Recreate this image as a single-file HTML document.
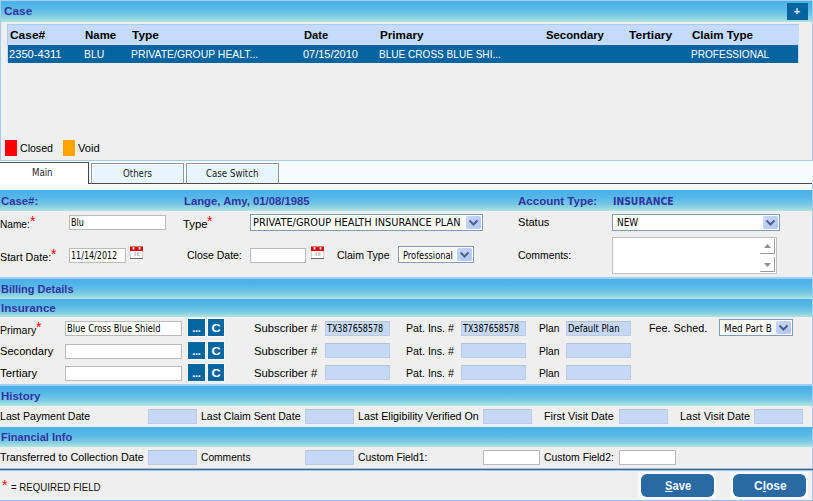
<!DOCTYPE html>
<html><head><meta charset="utf-8"><title>Case</title>
<style>
*{box-sizing:border-box;margin:0;padding:0}
html,body{width:813px;height:501px;overflow:hidden;background:#efefef}
.a{position:absolute}
.t{position:absolute;white-space:nowrap;transform-origin:0 0}
.l{font:normal 11px/14px "Liberation Sans",Arial,sans-serif}
.b{font:bold 11px/14px "Liberation Sans",Arial,sans-serif}
.i{font:normal 11px/14px "DejaVu Sans Condensed","DejaVu Sans",sans-serif}
.ib{font:bold 11px/14px "DejaVu Sans Condensed","DejaVu Sans",sans-serif}
.btn{font:bold 12px/14px "Liberation Sans",Arial,sans-serif}
.h13{font:bold 12px/14px "Liberation Sans",Arial,sans-serif}
.ast{color:#f00;font:normal 14px/14px "Liberation Sans",sans-serif}
.dd{background:linear-gradient(135deg,#c8d6fb,#b1c4f3);border-radius:2px}
.dd svg{position:absolute;left:0;top:0}
u{text-decoration:underline}
</style></head><body>
<div class="a" style="left:0px;top:0px;width:813px;height:22px;background:linear-gradient(#4aaeea 0%,#54b8e7 35%,#78c9e3 70%,#b0e4df 100%)"></div>
<div class="a" style="left:0px;top:0px;width:813px;height:1px;background:#a4d0fa"></div>
<div class="a" style="left:0px;top:22px;width:813px;height:139px;background:#efefef;border:1px solid #a2caf3;border-top:none"></div>
<div class="a" style="left:787px;top:3px;width:21px;height:17px;background:#06659e"></div>
<div class="a" style="left:7px;top:24px;width:792px;height:21px;background:#c5dbfb;border-top:1px solid #a9ccf7;border-left:1px solid #a9ccf7"></div>
<div class="a" style="left:8px;top:45px;width:790px;height:18px;background:#06659e"></div>
<div class="a" style="left:7px;top:45px;width:1px;height:18px;background:#c5dbfb"></div>
<div class="a" style="left:798px;top:45px;width:1px;height:18px;background:#c5dbfb"></div>
<div class="a" style="left:5px;top:140px;width:12px;height:16px;background:#fe0000"></div>
<div class="a" style="left:63px;top:140px;width:12px;height:16px;background:#ffa400"></div>
<div class="a" style="left:0px;top:161px;width:813px;height:29px;background:#f5fcff"></div>
<div class="a" style="left:88px;top:183px;width:724px;height:1px;background:#4a4a4a"></div>
<div class="a" style="left:0px;top:162px;width:89px;height:22px;background:#fff;border-top:1px solid #555;border-right:1px solid #444"></div>
<div class="a" style="left:91px;top:163px;width:93px;height:21px;background:#e7f5fd;border:1px solid #969696;border-bottom-color:#4a4a4a;box-shadow:inset 1px 1px 0 #f6fcff"></div>
<div class="a" style="left:186px;top:163px;width:93px;height:21px;background:#e7f5fd;border:1px solid #969696;border-bottom-color:#4a4a4a;box-shadow:inset 1px 1px 0 #f6fcff"></div>
<div class="a" style="left:0px;top:190px;width:813px;height:21px;background:linear-gradient(#4aaeea 0%,#54b8e7 35%,#78c9e3 70%,#b0e4df 100%)"></div>
<div class="a" style="left:0px;top:277px;width:813px;height:2px;background:#a2cdf8"></div>
<div class="a" style="left:0px;top:279px;width:813px;height:20px;background:linear-gradient(#4aaeea 0%,#54b8e7 35%,#78c9e3 70%,#b0e4df 100%)"></div>
<div class="a" style="left:0px;top:299px;width:813px;height:18px;background:linear-gradient(#4aaeea 0%,#54b8e7 35%,#78c9e3 70%,#b0e4df 100%)"></div>
<div class="a" style="left:0px;top:384px;width:813px;height:2px;background:#a2cdf8"></div>
<div class="a" style="left:0px;top:386px;width:813px;height:20px;background:linear-gradient(#4aaeea 0%,#54b8e7 35%,#78c9e3 70%,#b0e4df 100%)"></div>
<div class="a" style="left:0px;top:427px;width:813px;height:20px;background:linear-gradient(#4aaeea 0%,#54b8e7 35%,#78c9e3 70%,#b0e4df 100%)"></div>
<div class="a" style="left:812px;top:184px;width:1px;height:317px;background:#a4ccf2"></div>
<div class="a" style="left:812px;top:0px;width:1px;height:22px;background:#a4ccf2"></div>
<div class="a" style="left:0px;top:0px;width:1px;height:22px;background:#a4ccf2"></div>
<div class="a" style="left:69px;top:215px;width:97px;height:15px;background:#fff;border:1px solid #bababc"></div>
<div class="a" style="left:69px;top:248px;width:57px;height:15px;background:#fff;border:1px solid #bababc"></div>
<div class="a" style="left:250px;top:248px;width:56px;height:15px;background:#fff;border:1px solid #bababc"></div>
<div class="a" style="left:65px;top:321px;width:117px;height:15px;background:#fff;border:1px solid #bababc"></div>
<div class="a" style="left:65px;top:344px;width:117px;height:15px;background:#fff;border:1px solid #bababc"></div>
<div class="a" style="left:65px;top:366px;width:117px;height:15px;background:#fff;border:1px solid #bababc"></div>
<div class="a" style="left:325px;top:321px;width:65px;height:15px;background:#c5d9f7;border:1px solid #bccbe4;border-top-color:#b3c0d6"></div>
<div class="a" style="left:461px;top:321px;width:65px;height:15px;background:#c5d9f7;border:1px solid #bccbe4;border-top-color:#b3c0d6"></div>
<div class="a" style="left:566px;top:321px;width:65px;height:15px;background:#c5d9f7;border:1px solid #bccbe4;border-top-color:#b3c0d6"></div>
<div class="a" style="left:325px;top:343px;width:65px;height:15px;background:#c5d9f7;border:1px solid #bccbe4;border-top-color:#b3c0d6"></div>
<div class="a" style="left:461px;top:343px;width:65px;height:15px;background:#c5d9f7;border:1px solid #bccbe4;border-top-color:#b3c0d6"></div>
<div class="a" style="left:566px;top:343px;width:65px;height:15px;background:#c5d9f7;border:1px solid #bccbe4;border-top-color:#b3c0d6"></div>
<div class="a" style="left:325px;top:365px;width:65px;height:15px;background:#c5d9f7;border:1px solid #bccbe4;border-top-color:#b3c0d6"></div>
<div class="a" style="left:461px;top:365px;width:65px;height:15px;background:#c5d9f7;border:1px solid #bccbe4;border-top-color:#b3c0d6"></div>
<div class="a" style="left:566px;top:365px;width:65px;height:15px;background:#c5d9f7;border:1px solid #bccbe4;border-top-color:#b3c0d6"></div>
<div class="a" style="left:148px;top:409px;width:49px;height:15px;background:#c5d9f7;border:1px solid #bccbe4;border-top-color:#b3c0d6"></div>
<div class="a" style="left:305px;top:409px;width:49px;height:15px;background:#c5d9f7;border:1px solid #bccbe4;border-top-color:#b3c0d6"></div>
<div class="a" style="left:483px;top:409px;width:49px;height:15px;background:#c5d9f7;border:1px solid #bccbe4;border-top-color:#b3c0d6"></div>
<div class="a" style="left:619px;top:409px;width:49px;height:15px;background:#c5d9f7;border:1px solid #bccbe4;border-top-color:#b3c0d6"></div>
<div class="a" style="left:754px;top:409px;width:49px;height:15px;background:#c5d9f7;border:1px solid #bccbe4;border-top-color:#b3c0d6"></div>
<div class="a" style="left:148px;top:450px;width:49px;height:15px;background:#c5d9f7;border:1px solid #bccbe4;border-top-color:#b3c0d6"></div>
<div class="a" style="left:305px;top:450px;width:49px;height:15px;background:#c5d9f7;border:1px solid #bccbe4;border-top-color:#b3c0d6"></div>
<div class="a" style="left:483px;top:450px;width:57px;height:15px;background:#fff;border:1px solid #bababc"></div>
<div class="a" style="left:619px;top:450px;width:57px;height:15px;background:#fff;border:1px solid #bababc"></div>
<div class="a" style="left:612px;top:237px;width:165px;height:37px;background:#fff;border:1px solid #c0c1c4"></div>
<div class="a" style="left:250px;top:214px;width:233px;height:17px;background:#fff;border:1px solid #7f9db9"></div>
<div class="a dd" style="left:466px;top:216px;width:15px;height:13px"><svg width="15" height="13" viewBox="0 0 15 13"><path d="M3.5 4.5 L7.5 8.5 L11.5 4.5" fill="none" stroke="#4d6185" stroke-width="2"/></svg></div>
<div class="a" style="left:612px;top:214px;width:168px;height:17px;background:#fff;border:1px solid #7f9db9"></div>
<div class="a dd" style="left:763px;top:216px;width:15px;height:13px"><svg width="15" height="13" viewBox="0 0 15 13"><path d="M3.5 4.5 L7.5 8.5 L11.5 4.5" fill="none" stroke="#4d6185" stroke-width="2"/></svg></div>
<div class="a" style="left:398px;top:246px;width:76px;height:17px;background:#fff;border:1px solid #7f9db9"></div>
<div class="a dd" style="left:457px;top:248px;width:15px;height:13px"><svg width="15" height="13" viewBox="0 0 15 13"><path d="M3.5 4.5 L7.5 8.5 L11.5 4.5" fill="none" stroke="#4d6185" stroke-width="2"/></svg></div>
<div class="a" style="left:719px;top:319px;width:74px;height:17px;background:#fff;border:1px solid #7f9db9"></div>
<div class="a dd" style="left:776px;top:321px;width:15px;height:13px"><svg width="15" height="13" viewBox="0 0 15 13"><path d="M3.5 4.5 L7.5 8.5 L11.5 4.5" fill="none" stroke="#4d6185" stroke-width="2"/></svg></div>
<div class="a" style="left:188px;top:319px;width:17px;height:17px;background:#06669f;box-shadow:0 0 0 1px #f6f6f6"></div>
<div class="a" style="left:208px;top:319px;width:16px;height:17px;background:#06669f;box-shadow:0 0 0 1px #f6f6f6"></div>
<div class="a" style="left:188px;top:342px;width:17px;height:17px;background:#06669f;box-shadow:0 0 0 1px #f6f6f6"></div>
<div class="a" style="left:208px;top:342px;width:16px;height:17px;background:#06669f;box-shadow:0 0 0 1px #f6f6f6"></div>
<div class="a" style="left:188px;top:364px;width:17px;height:17px;background:#06669f;box-shadow:0 0 0 1px #f6f6f6"></div>
<div class="a" style="left:208px;top:364px;width:16px;height:17px;background:#06669f;box-shadow:0 0 0 1px #f6f6f6"></div>
<div class="a" style="left:0px;top:468px;width:813px;height:1px;background:#8ec2f7"></div>
<div class="a" style="left:0px;top:469px;width:813px;height:1px;background:#606060"></div>
<div class="a" style="left:0px;top:470px;width:813px;height:1px;background:#94c6f8"></div>
<div class="a" style="left:638px;top:472px;width:78px;height:27px;background:#f8f8f8"></div>
<div class="a" style="left:730px;top:472px;width:78px;height:27px;background:#f8f8f8"></div>
<div class="a" style="left:641px;top:474px;width:73px;height:23px;background:#2a6aa3;border-radius:6px"></div>
<div class="a" style="left:733px;top:474px;width:73px;height:23px;background:#2a6aa3;border-radius:6px"></div>
<div class="a" style="left:0px;top:500px;width:813px;height:1px;background:#94c8fa"></div>
<div class="t b" style="left:3.9px;top:4px;transform:scaleX(1.0724);color:#3232a2;">Case</div>
<div class="t b" style="left:10.3px;top:28px;transform:scaleX(1.0857);color:#000;">Case#</div>
<div class="t b" style="left:84.6px;top:28px;transform:scaleX(1.0411);color:#000;">Name</div>
<div class="t b" style="left:132.0px;top:28px;transform:scaleX(1.0821);color:#000;">Type</div>
<div class="t b" style="left:303.6px;top:28px;transform:scaleX(1.0149);color:#000;">Date</div>
<div class="t b" style="left:379.6px;top:28px;transform:scaleX(1.0614);color:#000;">Primary</div>
<div class="t b" style="left:546.3px;top:28px;transform:scaleX(1.0293);color:#000;">Secondary</div>
<div class="t b" style="left:628.6px;top:28px;transform:scaleX(1.0924);color:#000;">Tertiary</div>
<div class="t b" style="left:691.6px;top:28px;transform:scaleX(1.0523);color:#000;">Claim Type</div>
<div class="t l" style="left:9.3px;top:47px;transform:scaleX(1.0136);color:#fff;">2350-4311</div>
<div class="t l" style="left:84.0px;top:47px;transform:scaleX(0.9436);color:#fff;">BLU</div>
<div class="t l" style="left:130.6px;top:47px;transform:scaleX(0.9473);color:#fff;">PRIVATE/GROUP HEALT...</div>
<div class="t l" style="left:302.6px;top:47px;transform:scaleX(0.997);color:#fff;">07/15/2010</div>
<div class="t l" style="left:379.0px;top:47px;transform:scaleX(0.914);color:#fff;">BLUE CROSS BLUE SHI...</div>
<div class="t l" style="left:691.0px;top:47px;transform:scaleX(0.9138);color:#fff;">PROFESSIONAL</div>
<div class="t l" style="left:20.0px;top:141px;transform:scaleX(0.9606);color:#000;">Closed</div>
<div class="t l" style="left:78.0px;top:141px;transform:scaleX(1.0177);color:#000;">Void</div>
<div class="t i" style="left:31.6px;top:166px;transform:scaleX(0.8714);color:#222;">Main</div>
<div class="t i" style="left:122.6px;top:167px;transform:scaleX(0.8688);color:#222;">Others</div>
<div class="t i" style="left:206.0px;top:167px;transform:scaleX(0.8736);color:#222;">Case Switch</div>
<div class="t b" style="left:1.0px;top:194px;transform:scaleX(1.0311);color:#3232a2;">Case#:</div>
<div class="t b" style="left:183.6px;top:194px;transform:scaleX(1.027);color:#3232a2;">Lange, Amy, 01/08/1985</div>
<div class="t b" style="left:518.3px;top:194px;transform:scaleX(1.0479);color:#3232a2;">Account Type:</div>
<div class="t ib" style="left:612.6px;top:195px;transform:scaleX(0.9364);color:#3232a2;">INSURANCE</div>
<div class="t l" style="left:0.0px;top:217px;transform:scaleX(0.9196);color:#000;">Name:</div>
<div class="t l" style="left:182.6px;top:217px;transform:scaleX(1.031);color:#000;">Type</div>
<div class="t l" style="left:517.7px;top:215px;transform:scaleX(1.0068);color:#000;">Status</div>
<div class="t i" style="left:71.0px;top:216px;transform:scaleX(0.8095);color:#000;">Blu</div>
<div class="t i" style="left:253.3px;top:216px;transform:scaleX(0.9891);color:#000;">PRIVATE/GROUP HEALTH INSURANCE PLAN</div>
<div class="t i" style="left:617.3px;top:216px;transform:scaleX(0.9039);color:#000;">NEW</div>
<div class="t l" style="left:0.0px;top:250px;transform:scaleX(0.9738);color:#000;">Start Date:</div>
<div class="t l" style="left:187.0px;top:248px;transform:scaleX(0.9533);color:#000;">Close Date:</div>
<div class="t l" style="left:336.6px;top:248px;transform:scaleX(0.9594);color:#000;">Claim Type</div>
<div class="t l" style="left:517.6px;top:248px;transform:scaleX(0.9458);color:#000;">Comments:</div>
<div class="t i" style="left:71.0px;top:249px;transform:scaleX(0.8101);color:#000;">11/14/2012</div>
<div class="t i" style="left:402.6px;top:249px;transform:scaleX(0.8395);color:#000;">Professional</div>
<div class="t b" style="left:1.0px;top:282px;transform:scaleX(0.9966);color:#3232a2;">Billing Details</div>
<div class="t b" style="left:1.0px;top:301px;transform:scaleX(1.0545);color:#3232a2;">Insurance</div>
<div class="t b" style="left:1.0px;top:389px;transform:scaleX(1.042);color:#3232a2;">History</div>
<div class="t b" style="left:1.0px;top:430px;transform:scaleX(1.0041);color:#3232a2;">Financial Info</div>
<div class="t l" style="left:0.0px;top:323px;transform:scaleX(0.9554);color:#000;">Primary</div>
<div class="t l" style="left:253.6px;top:321px;transform:scaleX(1.0232);color:#000;">Subscriber #</div>
<div class="t l" style="left:405.6px;top:321px;transform:scaleX(0.9671);color:#000;">Pat. Ins. #</div>
<div class="t l" style="left:539.3px;top:321px;transform:scaleX(0.9305);color:#000;">Plan</div>
<div class="t l" style="left:0.0px;top:344px;transform:scaleX(1.0115);color:#000;">Secondary</div>
<div class="t l" style="left:253.6px;top:344px;transform:scaleX(1.0232);color:#000;">Subscriber #</div>
<div class="t l" style="left:405.6px;top:344px;transform:scaleX(0.9671);color:#000;">Pat. Ins. #</div>
<div class="t l" style="left:539.3px;top:344px;transform:scaleX(0.9305);color:#000;">Plan</div>
<div class="t l" style="left:0.0px;top:366px;transform:scaleX(1.0315);color:#000;">Tertiary</div>
<div class="t l" style="left:253.6px;top:366px;transform:scaleX(1.0232);color:#000;">Subscriber #</div>
<div class="t l" style="left:405.6px;top:366px;transform:scaleX(0.9671);color:#000;">Pat. Ins. #</div>
<div class="t l" style="left:539.3px;top:366px;transform:scaleX(0.9305);color:#000;">Plan</div>
<div class="t i" style="left:67.0px;top:322px;transform:scaleX(0.844);color:#000;">Blue Cross Blue Shield</div>
<div class="t i" style="left:327.0px;top:322px;transform:scaleX(0.8088);color:#000;">TX387658578</div>
<div class="t i" style="left:463.0px;top:322px;transform:scaleX(0.8088);color:#000;">TX387658578</div>
<div class="t i" style="left:568.0px;top:322px;transform:scaleX(0.8532);color:#000;">Default Plan</div>
<div class="t l" style="left:648.6px;top:321px;transform:scaleX(0.981);color:#000;">Fee. Sched.</div>
<div class="t i" style="left:724.0px;top:322px;transform:scaleX(0.8937);color:#000;">Med Part B</div>
<div class="t l" style="left:0.0px;top:409px;transform:scaleX(0.9641);color:#000;">Last Payment Date</div>
<div class="t l" style="left:201.0px;top:409px;transform:scaleX(0.9573);color:#000;">Last Claim Sent Date</div>
<div class="t l" style="left:358.0px;top:409px;transform:scaleX(0.9732);color:#000;">Last Eligibility Verified On</div>
<div class="t l" style="left:544.0px;top:409px;transform:scaleX(0.9788);color:#000;">First Visit Date</div>
<div class="t l" style="left:680.0px;top:409px;transform:scaleX(0.9924);color:#000;">Last Visit Date</div>
<div class="t l" style="left:0.0px;top:450px;transform:scaleX(0.9827);color:#000;">Transferred to Collection Date</div>
<div class="t l" style="left:201.0px;top:450px;transform:scaleX(0.9307);color:#000;">Comments</div>
<div class="t l" style="left:358.0px;top:450px;transform:scaleX(0.9394);color:#000;">Custom Field1:</div>
<div class="t l" style="left:544.0px;top:450px;transform:scaleX(0.9434);color:#000;">Custom Field2:</div>
<div class="t l" style="left:10.6px;top:480px;transform:scaleX(0.8803);color:#111;">= REQUIRED FIELD</div>
<div class="t btn" style="left:664.9px;top:479px;transform:scaleX(0.9347);color:#eef4fa;"><u>S</u>ave</div>
<div class="t btn" style="left:753.5px;top:479px;transform:scaleX(1.0004);color:#eef4fa;">C<u>l</u>ose</div>

<div class="t btxt" style="left:786.5px;top:4px;width:21px;text-align:center;color:#fff;font:bold 11px/14px 'Liberation Sans',sans-serif">+</div>
<div class="t" style="left:188px;top:321px;width:17px;text-align:center;color:#fff;font:bold 11px/14px 'Liberation Sans',sans-serif;letter-spacing:-0.3px">...</div><div class="t" style="left:208px;top:321px;width:16px;text-align:center;color:#fff;font:bold 11px/14px 'Liberation Sans',sans-serif;transform:scaleX(1.15);transform-origin:50% 50%">C</div><div class="t" style="left:188px;top:344px;width:17px;text-align:center;color:#fff;font:bold 11px/14px 'Liberation Sans',sans-serif;letter-spacing:-0.3px">...</div><div class="t" style="left:208px;top:344px;width:16px;text-align:center;color:#fff;font:bold 11px/14px 'Liberation Sans',sans-serif;transform:scaleX(1.15);transform-origin:50% 50%">C</div><div class="t" style="left:188px;top:366px;width:17px;text-align:center;color:#fff;font:bold 11px/14px 'Liberation Sans',sans-serif;letter-spacing:-0.3px">...</div><div class="t" style="left:208px;top:366px;width:16px;text-align:center;color:#fff;font:bold 11px/14px 'Liberation Sans',sans-serif;transform:scaleX(1.15);transform-origin:50% 50%">C</div><div class="t ast" style="left:30px;top:214px">*</div><div class="t ast" style="left:207px;top:214px">*</div><div class="t ast" style="left:51px;top:247px">*</div><div class="t ast" style="left:36px;top:320px">*</div><div class="t ast" style="left:2px;top:478px">*</div><svg class="a" style="left:130px;top:246px" width="13" height="13" viewBox="0 0 13 13"><rect x="0.5" y="4.5" width="12" height="8" fill="#fff" stroke="#d2d2d2"/><rect x="0" y="12" width="13" height="1" fill="#6a6a6a"/><rect x="0" y="0.5" width="13" height="4.5" fill="#e00505"/><rect x="2.5" y="1" width="2" height="2.5" fill="#dff0f4" stroke="#c05050" stroke-width=".5"/><rect x="8.5" y="1" width="2" height="2.5" fill="#dff0f4" stroke="#c05050" stroke-width=".5"/><rect x="4.5" y="6" width="1.5" height="4" fill="#c9c9c9"/><rect x="7" y="6" width="2.5" height="4" fill="#d0d0d0"/></svg><svg class="a" style="left:311px;top:246px" width="13" height="13" viewBox="0 0 13 13"><rect x="0.5" y="4.5" width="12" height="8" fill="#fff" stroke="#d2d2d2"/><rect x="0" y="12" width="13" height="1" fill="#6a6a6a"/><rect x="0" y="0.5" width="13" height="4.5" fill="#e00505"/><rect x="2.5" y="1" width="2" height="2.5" fill="#dff0f4" stroke="#c05050" stroke-width=".5"/><rect x="8.5" y="1" width="2" height="2.5" fill="#dff0f4" stroke="#c05050" stroke-width=".5"/><rect x="4.5" y="6" width="1.5" height="4" fill="#c9c9c9"/><rect x="7" y="6" width="2.5" height="4" fill="#d0d0d0"/></svg><svg class="a" style="left:758px;top:238px" width="18" height="35" viewBox="0 0 18 35"><path d="M16.5 1 V16 M2 15.5 H17 M16.5 19 V34 M2 33.5 H17" stroke="#9c9c9c" fill="none"/><path d="M6 10 L9.5 6 L13 10 Z M6 25 L13 25 L9.5 29 Z" fill="#8e8e8e"/></svg>
</body></html>
